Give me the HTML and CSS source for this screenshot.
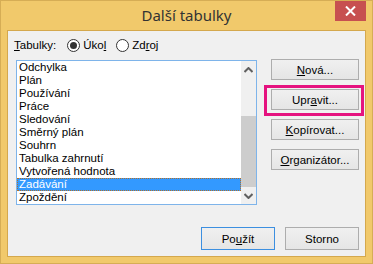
FILE: index.html
```html
<!DOCTYPE html>
<html lang="cs">
<head>
  <meta charset="UTF-8" />
  <title>Další tabulky</title>
  <link rel="stylesheet" href="styles.css">
</head>
<body>
  <div class="window">
    <div class="titlebar">
      <span class="title">Další tabulky</span>
      <button class="close-btn" aria-label="Zavřít">
        <svg width="11" height="10" viewBox="0 0 11 10"><path d="M1 0.5 L10 9.5 M10 0.5 L1 9.5" stroke="#fff" stroke-width="2"/></svg>
      </button>
    </div>

    <div class="client">
      <div class="table-type">
        <span class="label"><u>T</u>abulky:</span>
        <label class="radio"><span class="dot checked"></span>Úko<u>l</u></label>
        <label class="radio"><span class="dot"></span>Zd<u>r</u>oj</label>
      </div>

      <div class="main">
        <div class="listbox">
          <ul class="items">
            <li>Odchylka</li>
            <li>Plán</li>
            <li>Používání</li>
            <li>Práce</li>
            <li>Sledování</li>
            <li>Směrný plán</li>
            <li>Souhrn</li>
            <li>Tabulka zahrnutí</li>
            <li>Vytvořená hodnota</li>
            <li class="selected">Zadávání</li>
            <li>Zpoždění</li>
          </ul>
          <div class="scrollbar">
            <div class="arrow">
              <svg width="9" height="6" viewBox="0 0 9 6"><path d="M0.5 5 L4.5 1 L8.5 5" stroke="#606060" stroke-width="2" fill="none"/></svg>
            </div>
            <div class="track"><div class="thumb"></div></div>
            <div class="arrow">
              <svg width="9" height="6" viewBox="0 0 9 6"><path d="M0.5 1 L4.5 5 L8.5 1" stroke="#606060" stroke-width="2" fill="none"/></svg>
            </div>
          </div>
        </div>

        <div class="side-buttons">
          <button class="btn"><u>N</u>ová...</button>
          <div class="highlight-wrap">
            <button class="btn">Upr<u>a</u>vit...</button>
          </div>
          <button class="btn"><u>K</u>opírovat...</button>
          <button class="btn"><u>O</u>rganizátor...</button>
        </div>
      </div>

      <div class="footer">
        <button class="btn btn-default">Po<u>u</u>žít</button>
        <button class="btn">Storno</button>
      </div>
    </div>
  </div>
</body>
</html>
```

FILE: styles.css
```css
body {
  margin: 0;
  font-family: "Liberation Sans", Arial, sans-serif;
  font-size: 11.5px;
  color: #000;
}
.window {
  width: 373px;
  height: 264px;
  box-sizing: border-box;
  background: #f1c96b;
  border: 1px solid #d6ad55;
  display: flex;
  flex-direction: column;
}
.titlebar {
  height: 29px;
  display: flex;
  align-items: center;
  justify-content: center;
  position: relative;
}
.title {
  font-family: "Noto Sans", sans-serif;
  font-size: 15px;
  color: #333;
  margin-top: -1px;
}
.close-btn {
  position: absolute;
  top: 0;
  right: 6px;
  width: 31px;
  height: 20px;
  border: none;
  padding: 0;
  background: #c75050;
  display: flex;
  align-items: center;
  justify-content: center;
}
.client {
  flex: 1;
  margin: 0 6px 6px 6px;
  border: 1px solid #d4a84d;
  background: #f0f0f0;
  padding: 6px 6px 6px 6px;
  display: flex;
  flex-direction: column;
}
.table-type {
  height: 16px;
  display: flex;
  align-items: center;
}
.label {
  margin-right: 11px;
}
.radio {
  display: flex;
  align-items: center;
  margin-right: 10px;
}
.dot {
  width: 11px;
  height: 11px;
  border: 1px solid #333;
  border-radius: 50%;
  background: #fff;
  margin-right: 3px;
  display: flex;
  align-items: center;
  justify-content: center;
}
.dot.checked::after {
  content: "";
  width: 7px;
  height: 7px;
  border-radius: 50%;
  background: #333;
}
.main {
  display: flex;
  align-items: flex-start;
  margin-top: 6px;
}
.listbox {
  margin-left: 2px;
  margin-top: 1px;
  width: 241px;
  height: 145px;
  box-sizing: border-box;
  border: 1px solid #7eb4ea;
  background: #fff;
  display: flex;
}
.items {
  list-style: none;
  margin: 0;
  padding: 0;
  flex: 1;
}
.items li {
  height: 13px;
  line-height: 13px;
  padding-left: 2px;
  white-space: nowrap;
}
.items li.selected {
  background: #3399ff;
  color: #fff;
  outline: 1px dotted #b0702a;
  outline-offset: -1px;
}
.scrollbar {
  width: 15px;
  background: #f0f0f0;
  display: flex;
  flex-direction: column;
}
.arrow {
  height: 17px;
  display: flex;
  align-items: center;
  justify-content: center;
}
.track {
  flex: 1;
  display: flex;
  flex-direction: column;
  justify-content: flex-end;
}
.thumb {
  height: 71px;
  background: #cdcdcd;
}
.side-buttons {
  margin-left: 14px;
  display: flex;
  flex-direction: column;
  gap: 9px;
}
.btn {
  width: 88px;
  height: 21px;
  padding: 0;
  border: 1px solid #adadad;
  background: linear-gradient(#f0f0f0, #e5e5e5);
  font-family: "Liberation Sans", Arial, sans-serif;
  font-size: 11.5px;
  color: #000;
}
.highlight-wrap {
  position: relative;
  display: flex;
}
.highlight-wrap::before {
  content: "";
  position: absolute;
  left: -7px;
  right: -5px;
  top: -4px;
  bottom: -6px;
  border: 3px solid #e5127f;
}
.footer {
  margin-top: auto;
  display: flex;
  justify-content: flex-end;
  gap: 10px;
}
.footer .btn {
  width: 74px;
  height: 23px;
}
.btn-default {
  border-color: #3c8fe0;
}
```
